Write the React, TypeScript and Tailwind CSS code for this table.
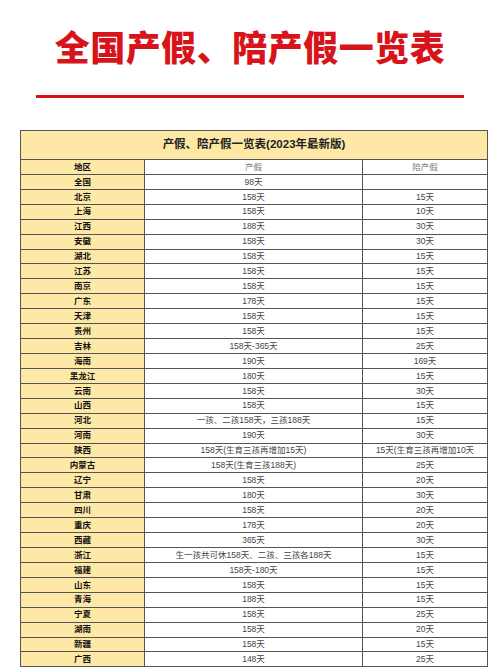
const rows: [string, string, string][] = [
  ["全国", "98天", ""],
  ["北京", "158天", "15天"],
  ["上海", "158天", "10天"],
  ["江西", "188天", "30天"],
  ["安徽", "158天", "30天"],
  ["湖北", "158天", "15天"],
  ["江苏", "158天", "15天"],
  ["南京", "158天", "15天"],
  ["广东", "178天", "15天"],
  ["天津", "158天", "15天"],
  ["贵州", "158天", "15天"],
  ["吉林", "158天-365天", "25天"],
  ["海南", "190天", "169天"],
  ["黑龙江", "180天", "15天"],
  ["云南", "158天", "30天"],
  ["山西", "158天", "15天"],
  ["河北", "一孩、二孩158天，三孩188天", "15天"],
  ["河南", "190天", "30天"],
  ["陕西", "158天(生育三孩再增加15天)", "15天(生育三孩再增加10天"],
  ["内蒙古", "158天(生育三孩188天)", "25天"],
  ["辽宁", "158天", "20天"],
  ["甘肃", "180天", "30天"],
  ["四川", "158天", "20天"],
  ["重庆", "178天", "20天"],
  ["西藏", "365天", "30天"],
  ["浙江", "生一孩共可休158天、二孩、三孩各188天", "15天"],
  ["福建", "158天-180天", "15天"],
  ["山东", "158天", "15天"],
  ["青海", "188天", "15天"],
  ["宁夏", "158天", "25天"],
  ["湖南", "158天", "20天"],
  ["新疆", "158天", "15天"],
  ["广西", "148天", "25天"],
];

const font = "font-['Liberation_Sans','Noto_Sans_CJK_SC',sans-serif]";

export default function App() {
  return (
    <div className={`min-h-screen bg-white ${font}`}>
      <div className="flex flex-col items-center pt-[31px]">
        <h1 className="text-[35px] font-black leading-none tracking-[0.5px] text-[#d8141b]">
          全国产假、陪产假一览表
        </h1>
        <div className="mt-[29px] h-[3px] w-[428px] bg-[#d8141b]" />
      </div>

      <div className="ml-[20px] mt-[32px] w-[467px]">
        <table className="w-full table-fixed border-collapse border border-[#555] text-center">
          <colgroup>
            <col className="w-[124px]" />
            <col className="w-[218px]" />
            <col className="w-[125px]" />
          </colgroup>
          <thead>
            <tr className="h-[29px] bg-[#fde8a6]">
              <th
                colSpan={3}
                className="border border-[#555] text-[11.5px] font-bold text-[#222]"
              >
                产假、陪产假一览表(2023年最新版)
              </th>
            </tr>
            <tr className="h-[14.93px] text-[8.5px] leading-none">
              <th className="border border-[#555] bg-[#fde8a6] font-bold text-[#111]">地区</th>
              <th className="border border-[#555] font-normal text-[#777]">产假</th>
              <th className="border border-[#555] font-normal text-[#777]">陪产假</th>
            </tr>
          </thead>
          <tbody className="text-[8.5px] leading-none">
            {rows.map(([region, leave, paternity]) => (
              <tr key={region} className="h-[14.93px]">
                <td className="border border-[#555] bg-[#fde8a6] font-bold text-[#111]">{region}</td>
                <td className="border border-[#555] text-[#444] whitespace-nowrap">{leave}</td>
                <td className="border border-[#555] text-[#444] whitespace-nowrap">{paternity}</td>
              </tr>
            ))}
          </tbody>
        </table>
      </div>
    </div>
  );
}
